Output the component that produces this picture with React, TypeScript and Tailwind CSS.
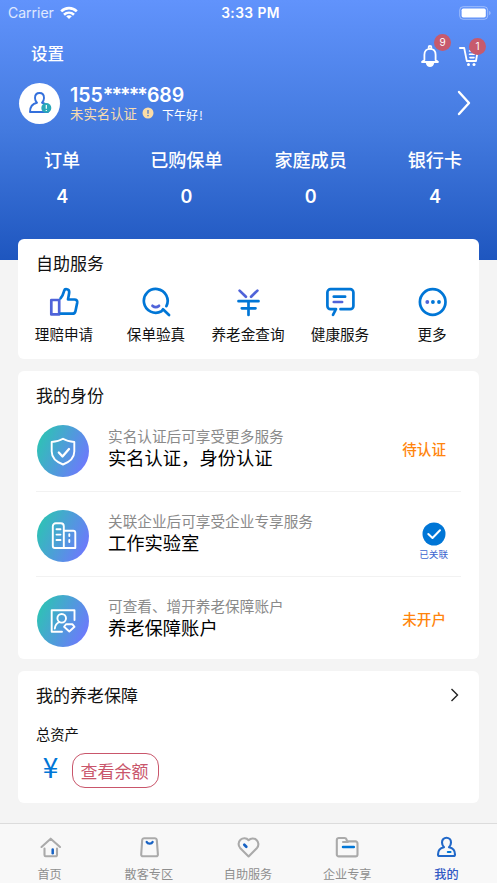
import React from 'react';

const BLUE = '#0076d6';
const VIOLET = '#4f63d9';
const GRAY = '#aaaaaa';

const stats = [
  { label: '订单', value: 4 },
  { label: '已购保单', value: 0 },
  { label: '家庭成员', value: 0 },
  { label: '银行卡', value: 4 },
];

// Self-service icons, all on a 30x30 grid
const services = [
  {
    label: '理赔申请',
    icon: (
      <>
        <path d="M2.3 13h7.9v14.400H2.300z" stroke={VIOLET} />
        <path d="M11.600 11.300C14 9 14.500 6 15.200 3.600c.6-2.200 5-1.800 5 1.500 0 2.600-.9 4.600-1.200 7.400h6.500c2 0 3 1.400 2.700 3.200l-1.700 8.200c-.4 2-1.500 2.800-3.200 2.800H11.800" stroke={BLUE} />
      </>
    ),
  },
  {
    label: '保单验真',
    icon: (
      <>
        <path d="M25.400 19.200A11.900 11.900 0 1 0 20.500 24.300L22 22.300L28 28" stroke={BLUE} />
        <path d="M11.500 18.800c2 1.500 4.500 1.500 6.500 0" stroke={VIOLET} />
      </>
    ),
  },
  {
    label: '养老金查询',
    icon: (
      <>
        <path d="M6.600 3.600l6.300 6.200M24.400 3.600l-6.300 6.200" stroke={VIOLET} />
        <path d="M5.500 14.200h20M8.800 21.300h13.700M15.500 14.200v13.800" stroke={BLUE} />
      </>
    ),
  },
  {
    label: '健康服务',
    icon: (
      <>
        <path d="M11 22.200H5.600A3.200 3.200 0 0 1 2.400 19V5.400A3.200 3.200 0 0 1 5.600 2.200h19.600a3.200 3.200 0 0 1 3.200 3.200V19a3.200 3.200 0 0 1-3.200 3.200H15.500M11 22.200L8 27.800" stroke={BLUE} />
        <path d="M8.800 9.700h11.300" stroke={BLUE} />
        <path d="M8.800 15h8.300" stroke={VIOLET} />
      </>
    ),
  },
  {
    label: '更多',
    icon: (
      <>
        <circle cx="15.700" cy="15" r="12.800" stroke={BLUE} />
        <circle cx="10.300" cy="15" r="1.900" fill={VIOLET} stroke="none" />
        <circle cx="15.900" cy="15" r="1.900" fill={BLUE} stroke="none" />
        <circle cx="22" cy="15" r="1.900" fill={BLUE} stroke="none" />
      </>
    ),
  },
];

const identities = [
  {
    hint: '实名认证后可享受更多服务',
    title: '实名认证，身份认证',
    status: '待认证',
    linked: false,
    icon: (
      <>
        <path d="M26 13.800c3.500 2.200 7.300 3 11.300 3.200v9.500c0 6-4.300 10.300-11.300 13-7-2.700-11.300-7-11.300-13V17c4-.2 7.800-1 11.300-3.200z" />
        <path d="M21.800 27.500l3.700 4 6.500-7.500" strokeWidth="2.300" />
      </>
    ),
  },
  {
    hint: '关联企业后可享受企业专享服务',
    title: '工作实验室',
    status: '已关联',
    linked: true,
    icon: (
      <>
        <path d="M15.800 36V16.200a3 3 0 0 1 3-3h5a3 3 0 0 1 3 3V38H17.800a2 2 0 0 1-2-2zM26.800 20.800h9.500a2 2 0 0 1 2 2V38H26.800" />
        <path d="M19.500 19.200h4M19.500 24.600h4M19.500 30h4M32.300 24.300v1.700M32.300 30v2" />
      </>
    ),
  },
  {
    hint: '可查看、增开养老保障账户',
    title: '养老保障账户',
    status: '未开户',
    linked: false,
    icon: (
      <>
        <path d="M25 36.700H14.700V15.300h22.800V25" />
        <circle cx="24.700" cy="23.300" r="4.300" />
        <path d="M17.800 33.500c.4-3.300 2-5.300 4.500-6.500" />
        <path d="M29 29.300h6.500l2 2.500-5.200 4.700-5.200-4.700z" />
      </>
    ),
  },
];

// Bottom navigation icons, on a 24x24 grid
const tabs = [
  {
    label: '首页',
    icon: (
      <>
        <path d="M3.500 12L12.700 3.700 22 12M6.500 13.500V20a1.200 1.200 0 0 0 1.200 1.200h10A1.200 1.200 0 0 0 19 20v-6.500" stroke={GRAY} />
        <path d="M14.700 14.500v3.700" stroke="#1762c4" strokeWidth="2.500" />
      </>
    ),
  },
  {
    label: '散客专区',
    icon: (
      <>
        <path d="M7 3.200h11a1.800 1.800 0 0 1 1.800 1.600l1.100 14.500a1.800 1.800 0 0 1-1.800 2H6a1.800 1.800 0 0 1-1.800-2L5.200 4.800A1.800 1.800 0 0 1 7 3.200z" stroke={GRAY} />
        <path d="M9.700 7c1 2.200 4.900 2.200 5.900 0" stroke="#1762c4" strokeWidth="2.300" />
      </>
    ),
  },
  {
    label: '自助服务',
    icon: (
      <>
        <path d="M12.600 21.500L4.100 12.900a5.700 5.700 0 0 1 8.500-7.700 5.700 5.700 0 0 1 8.400 7.700z" stroke={GRAY} />
        <path d="M8.300 9.700l2 2" stroke="#1762c4" strokeWidth="2.700" />
      </>
    ),
  },
  {
    label: '企业专享',
    icon: (
      <>
        <path d="M1.800 5a2 2 0 0 1 2-2h5.800a2 2 0 0 1 1.900 1.400l.6 2h8.400a2 2 0 0 1 2 2v11a2 2 0 0 1-2 2H3.800a2 2 0 0 1-2-2zM8 7h5" stroke={GRAY} />
        <path d="M8 11.900h10.800" stroke={BLUE} strokeWidth="2.500" />
      </>
    ),
  },
  {
    label: '我的',
    icon: (
      <>
        <path d="M10 12.300C8.300 10.500 8 8.500 8 7.500c0-2.800 2-4.700 4.500-4.700S17 4.700 17 7.500c0 1-.3 3-2 4.800 4 .8 6 4 6 7.200a1.500 1.500 0 0 1-1.500 1.500h-14A1.500 1.500 0 0 1 4 19.500c0-3.200 2-6.400 6-7.200z" stroke="#2168c8" />
        <path d="M13.800 17h2.700" stroke={BLUE} />
      </>
    ),
  },
];

function StatusBar() {
  return (
    <div className="h-[26px] flex items-center pl-[8px] pr-[6px] font-['Inter','Liberation_Sans',sans-serif]">
      <div className="flex-1 flex items-center gap-[6px]">
        <span className="text-[14px] leading-[18px] text-white/80">Carrier</span>
        <svg width="18" height="14" viewBox="0 0 18 14" fill="none" stroke="white" strokeWidth="2.600">
          <path d="M1.200 5.300C5.500 1 12.500 1 16.800 5.300M4 8.700c2.900-2.700 7.100-2.700 10 0" />
          <path d="M9 13L6.200 10.300c1.600-1.400 4-1.400 5.600 0z" fill="white" stroke="none" />
        </svg>
      </div>
      <span className="ml-[2px] text-[13.800px] leading-[18px] font-semibold tracking-[0.400px] text-white">3:33 PM</span>
      <div className="flex-1 flex justify-end">
        <svg width="32" height="14" viewBox="0 0 32 14" fill="none">
          <rect x="0.700" y="0.700" width="28" height="12.600" rx="3.500" stroke="white" strokeOpacity="0.400" />
          <rect x="2.600" y="2.600" width="24.200" height="8.800" rx="1.700" fill="white" />
          <path d="M30.300 5v4.200c.7-.3 1.200-1.200 1.200-2.100s-.5-1.800-1.200-2.100z" fill="white" fillOpacity="0.500" />
        </svg>
      </div>
    </div>
  );
}

function Header() {
  return (
    <header className="h-[260px] shrink-0 bg-linear-to-b from-[#6193fc] via-[#437adf] to-[#1e56bf] text-white">
      <StatusBar />
      <div className="h-[56px] flex items-center justify-between pl-[31px] pr-[18px]">
        <h1 className="-mt-[2px] text-[16.500px] leading-[24px] font-medium">设置</h1>
        <div className="flex items-center gap-[19px] pt-[3px]">
          <div className="relative">
            <svg className="block" width="20" height="24" viewBox="0 0 20 24" fill="none" stroke="white" strokeWidth="1.800" strokeLinejoin="round">
              <circle cx="10" cy="3.300" r="1.400" />
              <path d="M4.400 16V10.800c0-3.800 2.200-6 5.600-6s5.600 2.200 5.600 6V16l2.400 2H2z" />
              <path d="M5.800 19h8.400c-.5 2.500-2 4-4.200 4s-3.700-1.500-4.200-4z" fill="white" stroke="none" />
            </svg>
            <span className="absolute left-[14px] -top-[10px] w-[17px] h-[17px] rounded-full bg-[#c75a6d] text-[10px] leading-[17px] text-center font-['Inter',sans-serif]">9</span>
          </div>
          <div className="relative">
            <svg className="block" width="20" height="24" viewBox="0 0 20 24" fill="none" stroke="white" strokeWidth="1.800" strokeLinecap="round" strokeLinejoin="round">
              <path d="M.9 4h4.300l2.600 13h9.200l1.500-9" />
              <path d="M10.500 7h4M10.500 10.300h5M11 13.600h4" strokeWidth="1.600" />
              <circle cx="9.500" cy="20.500" r="1.500" fill="white" stroke="none" />
              <circle cx="15" cy="20.500" r="1.500" fill="white" stroke="none" />
            </svg>
            <span className="absolute left-[10px] -top-[6px] w-[17px] h-[17px] rounded-full bg-[#c75a6d] text-[10px] leading-[17px] text-center font-['Inter',sans-serif]">1</span>
          </div>
        </div>
      </div>
      <div className="h-[42px] flex items-center pl-[19px] pr-[26px]">
        <div className="w-[41px] h-[41px] rounded-full bg-white flex items-center justify-center">
          <svg width="24" height="24" viewBox="0 0 24 24" fill="none" stroke="#3470dc" strokeWidth="1.900" strokeLinejoin="round">
            <path d="M9 11.700C7.500 10.400 7 8.500 7 7c0-3 1.800-5 4.500-5S16 4 16 7c0 1.500-.5 3.400-2 4.700 3.600.8 6 3.500 6 7.300v2H2c0-5.200 2.500-8.500 7-9.300z" />
            <circle cx="18.300" cy="17" r="5" fill="#2aa8b8" stroke="none" />
            <path d="M18.300 14v3.700M18.300 19v1" stroke="white" strokeWidth="1.200" />
          </svg>
        </div>
        <div className="ml-[10px] flex-1 flex flex-col">
          <span className="text-[19.500px] leading-[20px] font-semibold tracking-[-0.900px] [word-spacing:0] font-['Liberation_Sans',sans-serif]">
            <span className="font-['Inter',sans-serif] tracking-[0px]">155</span>
            <span className="font-['Inter',sans-serif] tracking-[-1.900px]">*****</span>
            <span className="ml-[1px] font-['Inter',sans-serif] tracking-[0px]">689</span>
          </span>
          <div className="flex items-center h-[16px]">
            <span className="text-[13.400px] leading-[15px] text-[#f8dcae]">未实名认证</span>
            <svg className="ml-[5px]" width="12" height="12" viewBox="0 0 12 12">
              <circle cx="6" cy="6" r="5.500" fill="#fbdca6" />
              <path d="M6 3v3.800M6 8v1.200" stroke="#4a78c8" strokeWidth="1.300" />
            </svg>
            <span className="ml-[8px] pt-[2px] text-[12px] leading-[13px]">下午好<span className="ml-[1px]">!</span></span>
          </div>
        </div>
        <svg width="14" height="26" viewBox="0 0 14 26" fill="none" stroke="white" strokeWidth="2.400" strokeLinecap="round" strokeLinejoin="round">
          <path d="M2 2l10 11L2 24" />
        </svg>
      </div>
      <div className="grid grid-cols-4 pt-[23px] text-center">
        {stats.map((s) => (
          <div key={s.label}>
            <div className="text-[18.100px] leading-[24px] font-medium">{s.label}</div>
            <div className="mt-[14px] text-[18px] leading-[24px] font-semibold font-['Inter','Liberation_Sans',sans-serif]">{s.value}</div>
          </div>
        ))}
      </div>
    </header>
  );
}

function ServicesCard() {
  return (
    <section className="-mt-[21px] h-[120px] shrink-0 rounded-md bg-white">
      <h2 className="pt-[12px] pl-[18px] text-[17px] leading-[24px]">自助服务</h2>
      <div className="grid grid-cols-5 mt-[12px] pr-[1px]">
        {services.map((s) => (
          <div key={s.label} className="flex flex-col items-center">
            <svg width="30" height="30" viewBox="0 0 30 30" fill="none" strokeWidth="2.700" strokeLinecap="round" strokeLinejoin="round">
              {s.icon}
            </svg>
            <span className="mt-[7px] text-[14.600px] leading-[20px] whitespace-nowrap">{s.label}</span>
          </div>
        ))}
      </div>
    </section>
  );
}

function IdentityCard() {
  return (
    <section className="mt-[12px] h-[288px] shrink-0 rounded-md bg-white px-[18px]">
      <h2 className="pt-[12px] text-[17px] leading-[24px]">我的身份</h2>
      {identities.map((item) => (
        <div key={item.title} className="h-[85px] flex items-start pt-[18px] border-b border-[#f2f2f2] last:border-b-0">
          <div className="ml-[1px] w-[52px] h-[52px] rounded-full bg-linear-[115deg] from-[#2ec2b5] from-10% to-[#6e78fd] to-90%">
            <svg width="52" height="52" viewBox="0 0 52 52" fill="none" stroke="white" strokeWidth="1.900" strokeLinecap="round" strokeLinejoin="round">
              {item.icon}
            </svg>
          </div>
          <div className="ml-[19px] flex-1">
            <div className="text-[14.650px] leading-[22px] text-[#8a8a8a]">{item.hint}</div>
            <div className="-mt-[1px] text-[18.300px] leading-[22px] text-black">{item.title}</div>
          </div>
          {item.linked ? (
            <div className="mr-[13px] pt-[12px] flex flex-col items-center">
              <svg width="24" height="24" viewBox="0 0 24 24" fill="none">
                <circle cx="12" cy="12" r="11.500" fill={BLUE} />
                <path d="M6.300 12l4.200 4 7.500-7.700" stroke="white" strokeWidth="2" strokeLinecap="round" strokeLinejoin="round" />
              </svg>
              <span className="mt-[1px] text-[9.600px] leading-[14px] text-[#3c66cf]">{item.status}</span>
            </div>
          ) : (
            <span className="mr-[15px] pt-[13px] text-[14.600px] leading-[22px] font-medium text-[#ff850d]">{item.status}</span>
          )}
        </div>
      ))}
    </section>
  );
}

function PensionCard() {
  return (
    <section className="mt-[12px] h-[132px] shrink-0 rounded-md bg-white pl-[18px] pr-[20px]">
      <div className="flex items-center justify-between pt-[12px]">
        <h2 className="text-[17px] leading-[24px]">我的养老保障</h2>
        <svg width="9" height="14" viewBox="0 0 9 14" fill="none" stroke="#222222" strokeWidth="1.400">
          <path d="M1.500 1l6 6-6 6" />
        </svg>
      </div>
      <div className="mt-[17px] text-[14.300px] leading-[20px]">总资产</div>
      <div className="flex items-center mt-[9px]">
        <span className="-mt-[9px] w-[29px] text-center text-[28px] leading-[28px] text-[#0076d6] font-['Noto_Sans_CJK_SC',sans-serif]">¥</span>
        <button className="ml-[7px] w-[87px] h-[35px] rounded-[13px] border border-[#c9566b] pb-[1px] pr-[2px] text-[17px] leading-[31px] text-[#c9566b]">查看余额</button>
      </div>
    </section>
  );
}

function TabBar() {
  return (
    <nav className="h-[60px] shrink-0 grid grid-cols-5 border-t border-[#dcdcdc] bg-[#f8f8f8] pr-[1px]">
      {tabs.map((tab, i) => (
        <div key={tab.label} className="flex flex-col items-center pt-[11px]">
          <svg className="shrink-0" width="24" height="24" viewBox="0 0 24 24" fill="none" strokeWidth="2.100" strokeLinecap="round" strokeLinejoin="round">
            {tab.icon}
          </svg>
          <span className={`mt-[7px] text-[12.100px] leading-[16px] ${i === 4 ? 'text-[#3159c4] font-medium' : 'text-[#8e8e8e]'}`}>{tab.label}</span>
        </div>
      ))}
    </nav>
  );
}

function App() {
  return (
    <div className="h-[883px] w-[497px] overflow-hidden flex flex-col bg-[#f4f4f4] text-[#111111] font-['Noto_Sans_CJK_SC',sans-serif]">
      <Header />
      <main className="flex-1 flex flex-col px-[18px]">
        <ServicesCard />
        <IdentityCard />
        <PensionCard />
      </main>
      <TabBar />
    </div>
  );
}

export default App;
